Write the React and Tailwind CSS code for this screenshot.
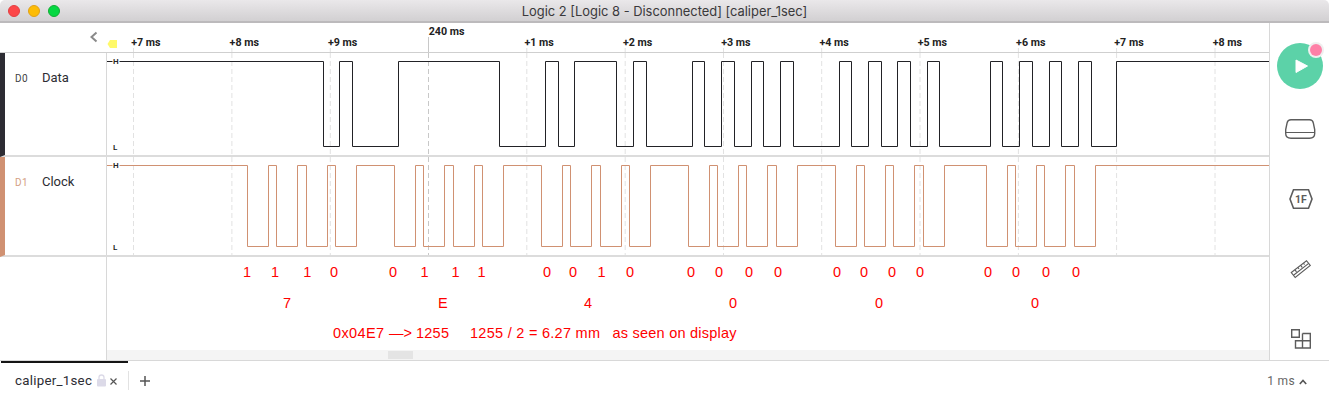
import React from "react";

const dataEdges = [323, 339, 352, 398, 499, 545, 558, 574, 616, 633, 646, 692, 704, 721, 734, 751, 763, 780, 793, 839, 851, 868, 881, 897, 910, 927, 939, 990, 1002, 1019, 1032, 1049, 1061, 1078, 1091, 1116];
const clockEdges = [247, 268, 276, 297, 306, 327, 335, 356, 394, 415, 423, 444, 453, 474, 482, 503, 541, 562, 570, 591, 600, 621, 629, 650, 688, 709, 717, 738, 746, 767, 776, 797, 835, 856, 864, 885, 893, 914, 923, 944, 986, 1007, 1015, 1036, 1044, 1065, 1074, 1095];
const ticks = [[133.5, "+7 ms"], [231.9, "+8 ms"], [330.3, "+9 ms"], [428.5, "240 ms"], [526.8, "+1 ms"], [625.2, "+2 ms"], [723.5, "+3 ms"], [821.7, "+4 ms"], [920, "+5 ms"], [1018.4, "+6 ms"], [1116.6, "+7 ms"], [1215, "+8 ms"]];
const bits = [[243, "1"], [271, "1"], [303.3, "1"], [330, "0"], [389, "0"], [420.5, "1"], [451.5, "1"], [477.5, "1"], [543, "0"], [569, "0"], [597.5, "1"], [626, "0"], [687, "0"], [715, "0"], [745, "0"], [774, "0"], [833, "0"], [860, "0"], [888, "0"], [916, "0"], [984, "0"], [1012, "0"], [1042, "0"], [1072, "0"]];
const nibbles = [[283, "7"], [438, "E"], [584, "4"], [729, "0"], [875, "0"], [1031, "0"]];

// Chart coordinates are window x minus the 107px channel column.
const ORIGIN = 107;

function wavePath(edges, high, low) {
  let level = high;
  let d = `M0 ${high}`;
  edges.forEach((x) => {
    level = level === high ? low : high;
    d += `H${x - ORIGIN + 0.5}V${level}`;
  });
  return d + "H1162";
}

function Ruler() {
  return (
    <svg className="block h-[30px] w-[1162px] shrink-0" viewBox="0 0 1162 30">
      <path d="M3 17H10V25H3L.5 21Z" fill="#fff969" />
      {ticks.map(([x, label]) => {
        const major = label === "240 ms";
        return (
          <g key={x}>
            <path d={`M${x - ORIGIN} ${major ? 14 : 25}V29`} stroke={major ? "#c8c8c8" : "#e2e2e2"} />
            <text x={x - ORIGIN - (major ? -0.2 : 2.3)} y={major ? 11.8 : 23} className="fill-[#222] font-['Roboto',sans-serif] text-[10.7px] font-bold">{label}</text>
          </g>
        );
      })}
      <path d="M0 29.5H1162" stroke="#cfcfcf" />
    </svg>
  );
}

function Wave({ edges, high, low, height, color }) {
  return (
    <svg className="block w-full shrink-0" height={height} viewBox={`0 0 1162 ${height}`}>
      {ticks.map(([x, label]) => (
        <path key={x} d={`M${x - ORIGIN} 0V${height}`} stroke={label === "240 ms" ? "#c8c8c8" : "#e2e2e2"} strokeDasharray="5 3" />
      ))}
      <path d={wavePath(edges, high, low)} fill="none" stroke={color} />
      <rect x="5.5" y={high - 4} width="7" height="8" fill="#fff" />
      <text x="5.9" y={high + 2.5} className="fill-[#222] font-['Roboto',sans-serif] text-[8px] font-semibold">H</text>
      <text x="5.9" y={low + 3} className="fill-[#222] font-['Roboto',sans-serif] text-[8px] font-semibold">L</text>
    </svg>
  );
}

function Channel({ id, name, bar, idColor, children }) {
  return (
    <div className={`flex border-b-2 border-l-[5px] border-b-[#dcdcdc] ${bar}`}>
      <div className="flex w-[102px] shrink-0 border-r border-[#d8d8d8]">
        <span className={`mt-[19px] ml-[10px] w-[27px] text-[10px] leading-[14px] tracking-[0.4px] ${idColor}`}>{id}</span>
        <span className="mt-[16px] text-[13px] leading-[18px] text-[#2d2d33]">{name}</span>
      </div>
      <div className="w-[1162px] shrink-0">{children}</div>
    </div>
  );
}

export default function App() {
  return (
    <div className="flex h-[400px] w-[1329px] flex-col overflow-hidden bg-white font-['Roboto',sans-serif]">
      <header className="relative flex h-[23px] shrink-0 items-center justify-center rounded-t-[5px] border-b-2 border-[#bcbabc] bg-linear-to-b from-[#eae8ea] to-[#d2d0d2]">
        <div className="absolute left-[8px] top-[5px] flex gap-2">
          <span className="size-3 rounded-full border border-[#e33e41] bg-[#fc4648]" />
          <span className="size-3 rounded-full border border-[#e1a116] bg-[#fdbc05]" />
          <span className="size-3 rounded-full border border-[#12ac35] bg-[#05d842]" />
        </div>
        <h1 className="mt-[2px] font-['Inter',sans-serif] text-[12.9px] leading-5 text-[#3a393b]">Logic 2 [Logic 8 - Disconnected] [caliper_1sec]</h1>
      </header>

      <div className="flex h-[337px] shrink-0">
        <main className="w-[1269px] shrink-0">
          <div className="flex">
            <div className="flex w-[107px] shrink-0 justify-end border-b border-[#cfcfcf] pr-[9px]">
              <svg width="8" height="12" viewBox="0 0 8 12" className="mt-[8px]" fill="none" stroke="#8a8a8a" strokeWidth="2"><path d="M6.5 1.5 1.5 6l5 4.5" /></svg>
            </div>
            <Ruler />
          </div>
          <Channel id="D0" name="Data" bar="border-l-[#2d2c33]" idColor="text-[#3f3f45]">
            <Wave edges={dataEdges} high={8.5} low={93.5} height={102} color="#222226" />
          </Channel>
          <Channel id="D1" name="Clock" bar="border-l-[#d09172]" idColor="text-[#d4a083]">
            <Wave edges={clockEdges} high={8.5} low={89.5} height={98} color="#d09172" />
          </Channel>
          <div className="flex h-[103px]">
            <div className="w-[107px] shrink-0 border-r border-[#d8d8d8]" />
            <div className="flex flex-1 flex-col">
              <svg className="block h-[93px] w-full" viewBox="0 0 1162 93">
                <g className="fill-[#ff0000] font-['Liberation_Sans',sans-serif] text-[14.5px]">
                  {bits.map(([x, t]) => <text key={x} x={x - ORIGIN} y="20">{t}</text>)}
                  {nibbles.map(([x, t]) => <text key={x} x={x - ORIGIN} y="51">{t}</text>)}
                  <text x="226" y="81" textLength="51">0x04E7</text>
                  <text x="282" y="81" textLength="23">—&gt;</text>
                  <text x="309" y="81" textLength="33">1255</text>
                  <text x="363" y="81" textLength="130">1255 / 2 = 6.27 mm</text>
                  <text x="505.5" y="81" textLength="124">as seen on display</text>
                </g>
              </svg>
              <div className="h-[10px] bg-[#f4f4f4] pt-px pl-[281px]"><div className="h-2 w-[25px] bg-[#e4e4e4]" /></div>
            </div>
          </div>
        </main>

        <aside className="flex w-[60px] flex-col items-center border-l border-[#d8d8d8] pl-px">
          <svg width="52" height="52" viewBox="0 0 52 52" className="mt-[18px] shrink-0">
            <circle cx="26" cy="25" r="23" fill="#5cd2a8" />
            <path d="M22 19 33.5 25 22 31.5Z" fill="#fff" stroke="#fff" strokeLinejoin="round" />
            <circle cx="42" cy="9" r="8" fill="#efefef" />
            <circle cx="42" cy="9" r="6" fill="#fe80a7" />
          </svg>
          <svg width="32" height="20" viewBox="0 0 32 20" className="mt-[26px] shrink-0" fill="none" stroke="#5c5c5c">
            <path strokeWidth="1.4" d="M7 .8H25.5Q28.6.8 29.3 3.8L30.7 10.5V14.5Q30.7 19.2 25.5 19.2H7Q1.7 19.2 1.7 14.5V10.5L3.1 3.8Q3.8.8 7 .8Z" />
            <path d="M2 13.5H30.5" />
          </svg>
          <svg width="24" height="20" viewBox="0 0 24 20" className="mt-[50px] ml-[2px] shrink-0" fill="none">
            <path d="M4.5 .8H19.5L23 10 19.5 19.2H4.5L1 10Z" stroke="#5c5c5c" strokeWidth="1.6" />
            <text x="12" y="14" textAnchor="middle" className="fill-[#5c5c5c] font-['Roboto',sans-serif] text-[10.5px] font-bold">1F</text>
          </svg>
          <svg width="22" height="20" viewBox="0 0 22 20" className="mt-[50px] ml-[2px] shrink-0" fill="none" stroke="#5c5c5c" strokeWidth="1.1">
            <path d="M1.3 13.5 16.5 1.7 20.3 6.5 5.2 18.5Z" /><path d="m5 10.8 1.5 2M8 8.5l1 1.4M10.7 6.4l1.5 2M13.5 4.2l1 1.4M3.5 16.2 18.7 4.4" />
          </svg>
          <svg width="22" height="22" viewBox="0 0 22 22" className="mt-[49px] ml-[2px] shrink-0" fill="none" stroke="#5c5c5c" strokeWidth="1.4">
            <path d="M1.7 1.7H9.3V9.3H1.7ZM12.5 5.5H20.3V20H5.5V12.7H20.3M12.5 5.5V20" />
          </svg>
        </aside>
      </div>

      <footer className="flex h-10 shrink-0 border-t border-[#d8d8d8]">
        <div className="ml-px flex w-[127px] items-start border-t-2 border-[#151515] pt-[8px] pl-[14px] text-[13.3px] leading-[19px] tracking-[0.26px] text-[#2d2d33]">
          <span>caliper_1sec</span>
          <svg width="9" height="13" viewBox="0 0 9 13" className="mt-[3px] ml-[5px]"><path d="M2 6V3.5a2.5 2.5 0 0 1 5 0V6" fill="none" stroke="#dcdae8" strokeWidth="1.3" /><rect x="0" y="5" width="9" height="7.5" rx="1" fill="#dcdae8" /></svg>
          <svg width="7" height="7" viewBox="0 0 7 7" className="mt-[7px] ml-[4px]" stroke="#555" strokeWidth="1.2"><path d="m.5.5 6 6m0-6-6 6" /></svg>
        </div>
        <div className="mt-[10px] h-[19px] w-px bg-[#e2e2e2]" />
        <svg width="10" height="10" viewBox="0 0 10 10" className="mt-[15px] ml-[11px]" stroke="#555" strokeWidth="1.5"><path d="M5 0V10M0 5H10" /></svg>
        <div className="mt-[11px] mr-[22px] ml-auto flex text-[12px] leading-[18px] tracking-[0.35px] text-[#666]">
          1 ms
          <svg width="8" height="6" viewBox="0 0 8 6" className="mt-[7px] ml-[4px]" fill="none" stroke="#555" strokeWidth="1.6"><path d="M.8 5 4 1.5 7.2 5" /></svg>
        </div>
      </footer>
    </div>
  );
}
